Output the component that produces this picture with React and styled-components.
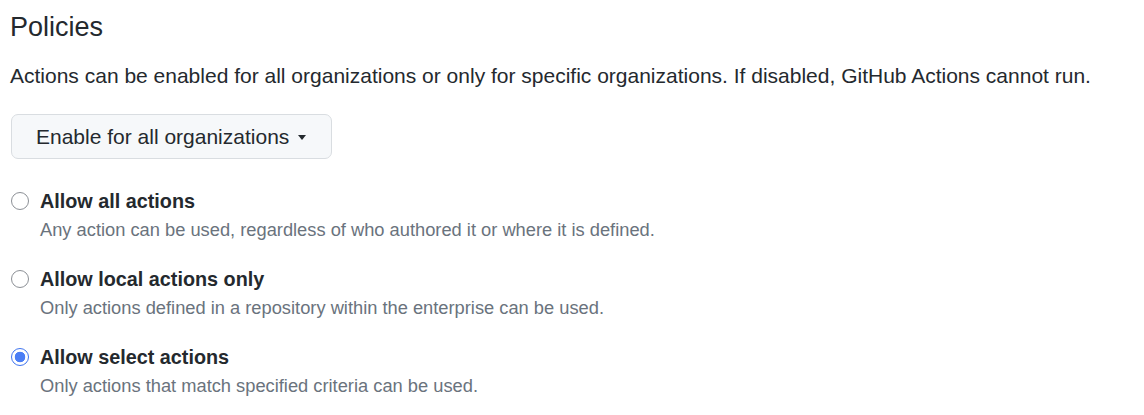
import React from "react";
import styled, { createGlobalStyle } from "styled-components";

const Global = createGlobalStyle`
  body {
    margin: 0;
    background: #fff;
    font-family: "Liberation Sans", Arial, sans-serif;
    color: #24292e;
  }
`;

const Page = styled.div`
  padding: 10px 10px 0 10px;
`;

const Title = styled.h2`
  margin: 0;
  font-size: 27px;
  font-weight: 400;
  line-height: 34px;
  color: #24292e;
`;

const Lead = styled.p`
  margin: 18px 0 0 0;
  font-size: 21px;
  line-height: 28px;
  color: #24292e;
`;

const Dropdown = styled.button`
  margin-top: 24px;
  margin-left: 1px;
  display: inline-flex;
  align-items: center;
  gap: 9px;
  height: 45px;
  padding: 0 25px 0 24px;
  background: #f6f8fa;
  border: 1px solid #d9dde1;
  border-radius: 7px;
  font-family: inherit;
  font-size: 21px;
  color: #24292e;
`;

const Caret = styled.span`
  width: 0;
  height: 0;
  border-left: 4.5px solid transparent;
  border-right: 4.5px solid transparent;
  border-top: 5px solid #24292e;
  margin-top: 2px;
`;

const Options = styled.div`
  margin-top: 31px;
  display: flex;
  flex-direction: column;
  gap: 27px;
`;

const Option = styled.label`
  display: grid;
  grid-template-columns: 20px 1fr;
  column-gap: 10px;
  align-items: center;
`;

const Radio = styled.span`
  width: 18px;
  height: 18px;
  box-sizing: border-box;
  margin-left: 1px;
  border-radius: 50%;
  border: 1.5px solid ${(p) => (p.checked ? "#3f74ef" : "#8c9096")};
  background: ${(p) =>
    p.checked
      ? "radial-gradient(circle, #4b7ef5 0 5px, #fff 5.6px)"
      : "#fff"};
`;

const Label = styled.span`
  font-size: 19.8px;
  font-weight: 700;
  line-height: 22px;
  color: #24292e;
`;

const Desc = styled.span`
  grid-column: 2;
  margin-top: 7px;
  font-size: 18.3px;
  line-height: 22px;
  color: #6a737d;
`;

const options = [
  {
    label: "Allow all actions",
    desc: "Any action can be used, regardless of who authored it or where it is defined.",
  },
  {
    label: "Allow local actions only",
    desc: "Only actions defined in a repository within the enterprise can be used.",
  },
  {
    label: "Allow select actions",
    desc: "Only actions that match specified criteria can be used.",
    checked: true,
  },
];

const App = () => {
  return (
    <Page>
      <Global />
      <Title>Policies</Title>
      <Lead>
        Actions can be enabled for all organizations or only for specific
        organizations. If disabled, GitHub Actions cannot run.
      </Lead>
      <Dropdown>
        Enable for all organizations <Caret />
      </Dropdown>
      <Options>
        {options.map((o) => (
          <Option key={o.label}>
            <Radio checked={o.checked} />
            <Label>{o.label}</Label>
            <Desc>{o.desc}</Desc>
          </Option>
        ))}
      </Options>
    </Page>
  );
};

export default App;
